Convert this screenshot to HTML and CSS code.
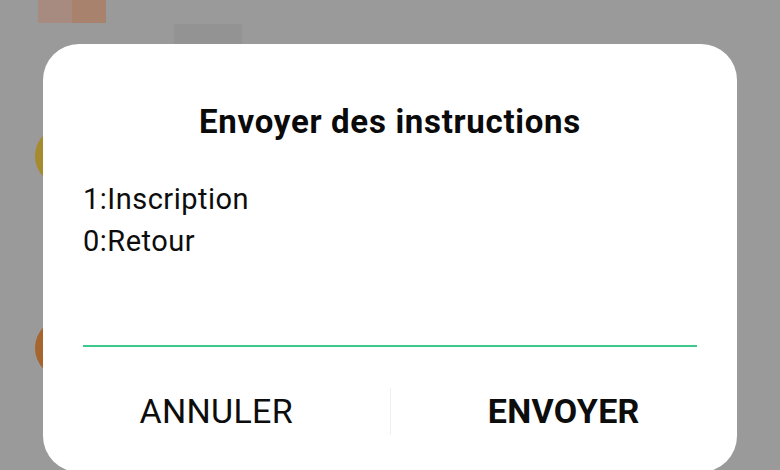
FILE: index.html
```html
<!DOCTYPE html>
<html lang="fr">
<head>
<meta charset="utf-8">
<link rel="stylesheet" href="styles.css">
</head>
<body>
<div class="screen">
  <div class="bg-tile tile-a"></div>
  <div class="bg-tile tile-b"></div>
  <div class="bg-tile tile-c"></div>
  <div class="bg-dot dot-yellow"></div>
  <div class="bg-dot dot-orange"></div>

  <div class="dialog">
    <h1 class="title">Envoyer des instructions</h1>
    <div class="message">
      <p>1:Inscription</p>
      <p>0:Retour</p>
    </div>
    <div class="input-line"></div>
    <div class="actions">
      <button class="btn">ANNULER</button>
      <span class="sep"></span>
      <button class="btn btn-primary">ENVOYER</button>
    </div>
  </div>
</div>
</body>
</html>
```

FILE: styles.css
```css
html, body {
  margin: 0;
  padding: 0;
}
body {
  width: 780px;
  height: 470px;
  overflow: hidden;
  background: #9a9a9a;
  font-family: Roboto, "Noto Sans", sans-serif;
}
.screen {
  position: relative;
  width: 780px;
  height: 470px;
  overflow: hidden;
}
.bg-tile {
  position: absolute;
}
.tile-a {
  left: 38px; top: 0; width: 34px; height: 23px;
  background: #a88b80;
}
.tile-b {
  left: 72px; top: 0; width: 34px; height: 23px;
  background: #a8826c;
}
.tile-c {
  left: 174px; top: 24px; width: 68px; height: 20px;
  background: #939393;
}
.bg-dot {
  position: absolute;
  width: 60px;
  height: 60px;
  border-radius: 50%;
}
.dot-yellow {
  left: 35px; top: 126px;
  background: #a58a2e;
}
.dot-orange {
  left: 35px; top: 318px;
  background: #a6652e;
}
.dialog {
  position: absolute;
  left: 43px;
  top: 44px;
  width: 694px;
  height: 428px;
  background: #fff;
  border-radius: 36px;
  display: flex;
  flex-direction: column;
  box-sizing: border-box;
  padding: 0 40px;
}
.title {
  margin: 58px 0 0;
  font-size: 33px;
  font-weight: 700;
  letter-spacing: 0.7px;
  line-height: 40px;
  text-align: center;
  color: #0a0a0a;
}
.message {
  margin-top: 36px;
  color: #0d0d0d;
  font-size: 29px;
  letter-spacing: 0.5px;
  line-height: 42px;
}
.message p {
  margin: 0;
}
.input-line {
  margin-top: 83px;
  height: 2px;
  background: #3ec98c;
}
.actions {
  display: flex;
  align-items: center;
  margin: 39px -40px 0;
  height: 50px;
}
.btn {
  flex: 1;
  border: 0;
  background: none;
  padding: 0;
  font-family: Roboto, "Noto Sans", sans-serif;
  font-size: 34px;
  letter-spacing: 0.3px;
  color: #0d0d0d;
  text-align: center;
}
.btn-primary {
  font-weight: 700;
}
.sep {
  width: 1px;
  height: 47px;
  background: #f0f0f0;
}
```
